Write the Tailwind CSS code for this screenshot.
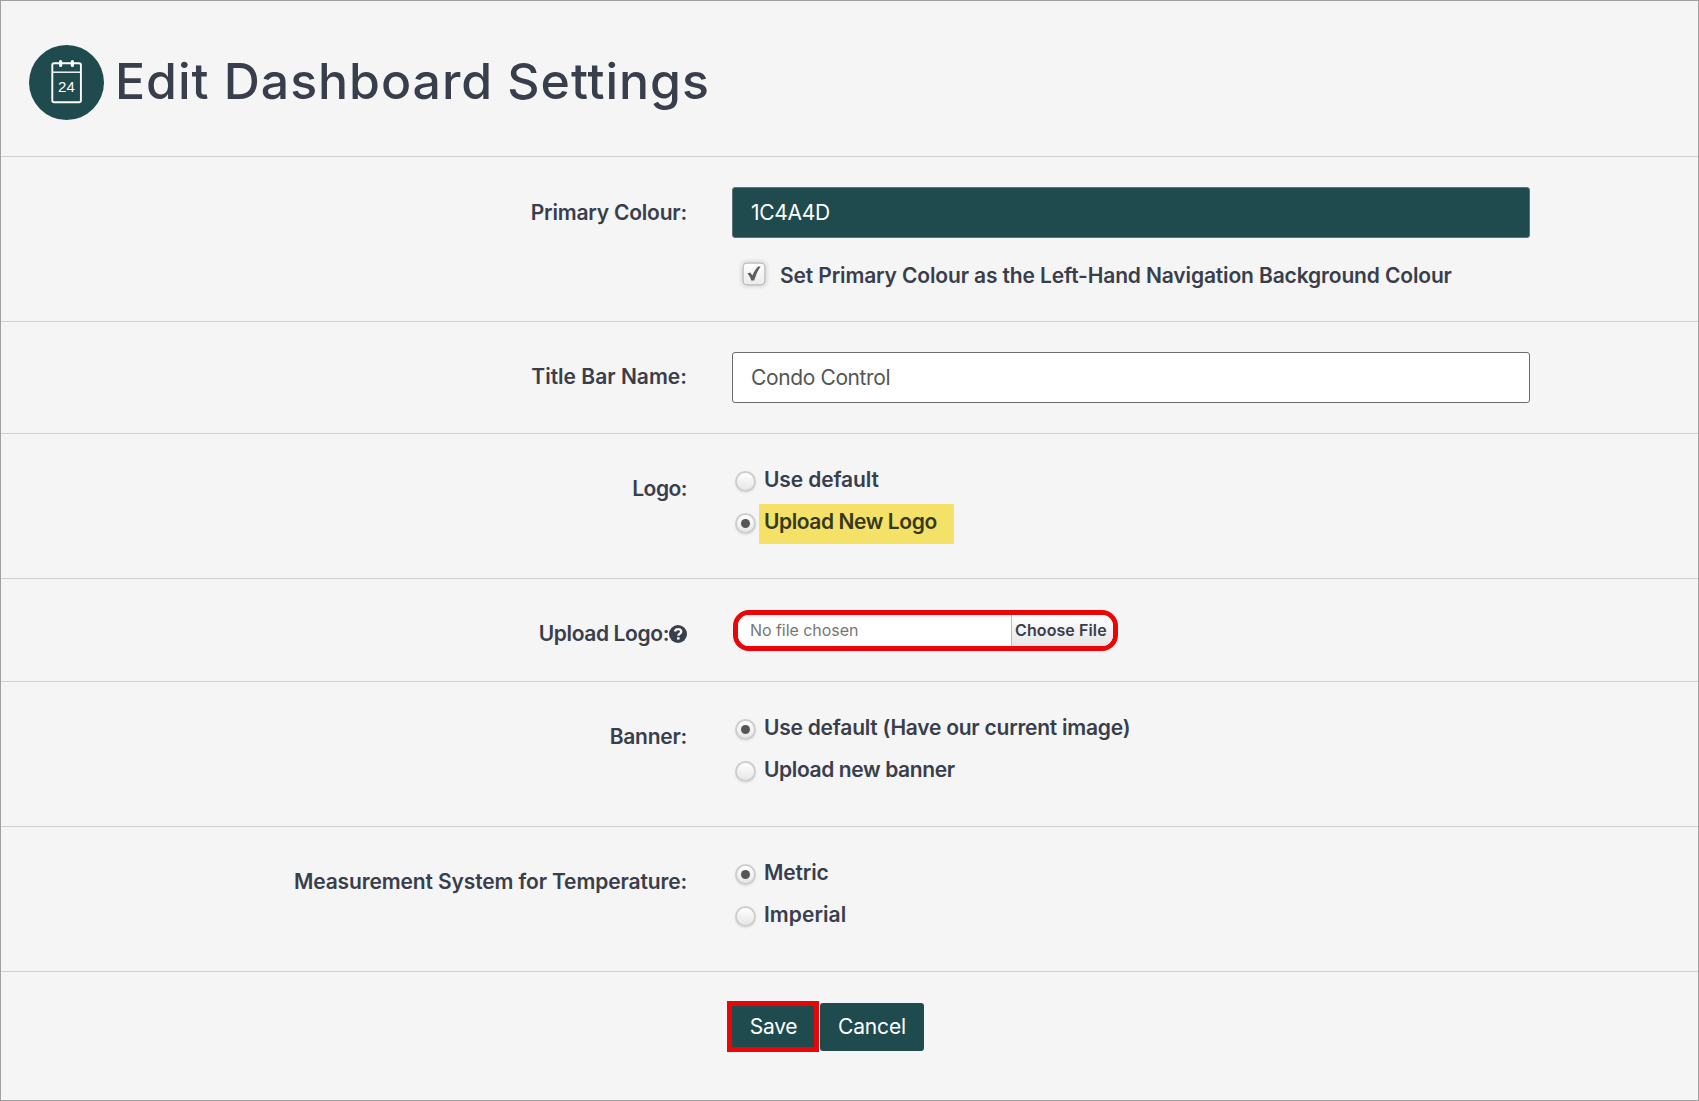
<!DOCTYPE html>
<html lang="en">
<head>
  <meta charset="UTF-8" />
  <meta name="viewport" content="width=device-width, initial-scale=1.0"/>
  <title>Edit Dashboard Settings</title>
  <script src="https://cdn.jsdelivr.net/npm/@tailwindcss/browser@4"></script>
</head>
<body class="bg-[#f5f5f5] font-['Inter',sans-serif] text-[21px] tracking-[-0.13px] text-[#393e4c]">

  <div class="h-[1101px] border border-[#a0a0a0] overflow-hidden">

    <header class="flex items-center h-[156px] pt-2 pl-7 border-b border-[#cfd0d1]">
      <svg class="w-[75px] h-[75px] shrink-0" viewBox="0 0 75 75" fill="none">
        <circle cx="37.5" cy="37.5" r="37.5" fill="#1f4b4e"/>
        <rect x="23.3" y="18.3" width="28.6" height="39" rx="1.8" stroke="#fff" stroke-width="1.9"/>
        <path d="M23 27.2H52" stroke="#fff" stroke-width="1.4"/>
        <path d="M31.6 16.6V20.4M43.4 16.6V20.4" stroke="#fff" stroke-width="3.2" stroke-linecap="round"/>
        <text x="37.4" y="47.4" text-anchor="middle" fill="#fff" font-family="Liberation Sans, sans-serif" font-size="15" letter-spacing="0">24</text>
      </svg>
      <h1 class="ml-[11px] mb-[3px] text-[50px] leading-none tracking-[0.95px] font-[540]">Edit Dashboard Settings</h1>
    </header>

    <main>
      <section class="grid grid-cols-[686px_1fr] gap-x-[45px] h-[165px] pt-[30px] border-b border-[#cfd0d1]">
        <div class="text-right font-semibold leading-[51px] tracking-[-0.2px]">Primary Colour:</div>
        <div>
          <input type="text" value="1C4A4D" class="block w-[798px] h-[51px] px-[18px] rounded-[3px] border border-[#5f7375] bg-[#1f4b4e] text-white tracking-[-0.3px]"/>
          <label class="flex items-center h-6 mt-[26px] pl-[10px] font-semibold">
            <svg class="w-6 h-6 mb-1 shrink-0 rounded-[5px] shadow-[0_0_3px_2px_#e3e3e3]" viewBox="0 0 24 24" fill="none">
              <defs>
                <linearGradient id="box" x1="0" y1="0" x2="0" y2="1">
                  <stop stop-color="#fff"/><stop offset="1" stop-color="#ebebeb"/>
                </linearGradient>
              </defs>
              <rect x="1" y="1" width="22" height="22" rx="4" fill="url(#box)" stroke="#bdbdbd" stroke-width="1.5"/>
              <path d="M5.4 11.6L8.2 10.4L10.4 13.6C12 9.8 13.8 6.8 16.2 4.6L18.6 4.4C15.6 8.6 13.8 13 12.2 18.4H9.2C8.4 15.6 7.2 13.4 5.4 11.6Z" fill="#5c5c5c"/>
            </svg>
            <span class="ml-[14px] tracking-[-0.14px]">Set Primary Colour as the Left-Hand Navigation Background Colour</span>
          </label>
        </div>
      </section>

      <section class="grid grid-cols-[686px_1fr] gap-x-[45px] h-[112px] pt-[30px] border-b border-[#cfd0d1]">
        <div class="text-right font-semibold leading-[50px] tracking-[0.01px]">Title Bar Name:</div>
        <input type="text" value="Condo Control" class="block w-[798px] h-[51px] px-[18px] rounded-[3px] border border-[#6b6b6b] bg-white text-[#555] tracking-[-0.38px]"/>
      </section>

      <section class="grid grid-cols-[686px_1fr] gap-x-[45px] h-[145px] pt-[25px] border-b border-[#cfd0d1] font-semibold">
        <div class="text-right leading-[60px] tracking-[-0.5px]">Logo:</div>
        <div>
          <label class="flex items-center h-[42px]">
            <span class="w-[21px] h-[21px] mt-[3px] ml-[3px] rounded-full border-2 border-[#cecece] bg-linear-to-b from-white to-[#e6e6e6] shadow-[0_1px_2px_#ddd]"></span>
            <span class="ml-2">Use default</span>
          </label>
          <label class="flex items-center h-[42px]">
            <span class="flex items-center justify-center w-[21px] h-[21px] mt-[3px] ml-[3px] rounded-full border-2 border-[#cecece] bg-linear-to-b from-white to-[#e6e6e6] shadow-[0_1px_2px_#ddd]"><i class="w-[9px] h-[9px] rounded-full bg-[#555]"></i></span>
            <span class="ml-[3px] mt-[3px] mb-[-1px] w-[195px] h-10 pl-[5px] leading-[36px] bg-[#f3e168] text-[#37391f] tracking-[-0.42px]">Upload New Logo</span>
          </label>
        </div>
      </section>

      <section class="grid grid-cols-[686px_1fr] gap-x-[45px] h-[103px] pt-[30px] border-b border-[#cfd0d1]">
        <div class="flex items-center justify-end h-[50px] font-semibold tracking-[-0.38px]">
          Upload Logo:
          <svg class="w-[18px] h-[18px] mb-[1px]" viewBox="0 0 18 18" fill="none">
            <circle cx="9" cy="9" r="9" fill="#393e4c"/>
            <path d="M5.9 6.6C6.3 4.9 7.5 4.1 9.1 4.1C11 4.1 12.2 5.2 12.2 6.7C12.2 8.8 9.3 8.7 9.3 10.8" stroke="#f5f5f5" stroke-width="2.4"/>
            <path d="M8 12.2H10.6V14.6H8Z" fill="#f5f5f5"/>
          </svg>
        </div>
        <div class="flex w-[385px] h-[41px] ml-[1px] mt-[1px] rounded-[16px] border-5 border-[#ea0606] overflow-hidden bg-white text-base tracking-[-0.05px]">
          <div class="w-[273px] pl-3 leading-[31px] text-[#777] bg-linear-to-b from-[#f3f3f3] to-white to-20%">No file chosen</div>
          <div class="flex-1 border-l border-[#bbb] pl-[3px] leading-[31px] font-semibold tracking-[0.1px] bg-linear-to-b from-white to-[#e6e6e6]">Choose File</div>
        </div>
      </section>

      <section class="grid grid-cols-[686px_1fr] gap-x-[45px] h-[145px] pt-[25px] border-b border-[#cfd0d1] font-semibold">
        <div class="text-right leading-[60px] tracking-[-0.25px]">Banner:</div>
        <div>
          <label class="flex items-center h-[42px]">
            <span class="flex items-center justify-center w-[21px] h-[21px] mt-[3px] ml-[3px] rounded-full border-2 border-[#cecece] bg-linear-to-b from-white to-[#e6e6e6] shadow-[0_1px_2px_#ddd]"><i class="w-[9px] h-[9px] rounded-full bg-[#555]"></i></span>
            <span class="ml-2 tracking-[-0.24px]">Use default (Have our current image)</span>
          </label>
          <label class="flex items-center h-[42px]">
            <span class="w-[21px] h-[21px] mt-[3px] ml-[3px] rounded-full border-2 border-[#cecece] bg-linear-to-b from-white to-[#e6e6e6] shadow-[0_1px_2px_#ddd]"></span>
            <span class="ml-2 tracking-[-0.38px]">Upload new banner</span>
          </label>
        </div>
      </section>

      <section class="grid grid-cols-[686px_1fr] gap-x-[45px] h-[145px] pt-[25px] border-b border-[#cfd0d1] font-semibold">
        <div class="text-right leading-[60px]">Measurement System for Temperature:</div>
        <div>
          <label class="flex items-center h-[42px]">
            <span class="flex items-center justify-center w-[21px] h-[21px] mt-[3px] ml-[3px] rounded-full border-2 border-[#cecece] bg-linear-to-b from-white to-[#e6e6e6] shadow-[0_1px_2px_#ddd]"><i class="w-[9px] h-[9px] rounded-full bg-[#555]"></i></span>
            <span class="ml-2">Metric</span>
          </label>
          <label class="flex items-center h-[42px]">
            <span class="w-[21px] h-[21px] mt-[3px] ml-[3px] rounded-full border-2 border-[#cecece] bg-linear-to-b from-white to-[#e6e6e6] shadow-[0_1px_2px_#ddd]"></span>
            <span class="ml-2 tracking-[0.05px]">Imperial</span>
          </label>
        </div>
      </section>

      <div class="flex items-center gap-[1px] pt-[29px] pl-[726px]">
        <button class="w-[92px] h-[51px] pl-[1px] border-5 border-[#ea0606] bg-[#1f4b4e] text-white tracking-[-0.3px]">Save</button>
        <button class="w-[104px] h-12 rounded-[3px] bg-[#1f4b4e] text-white">Cancel</button>
      </div>
    </main>

  </div>
</body>
</html>
